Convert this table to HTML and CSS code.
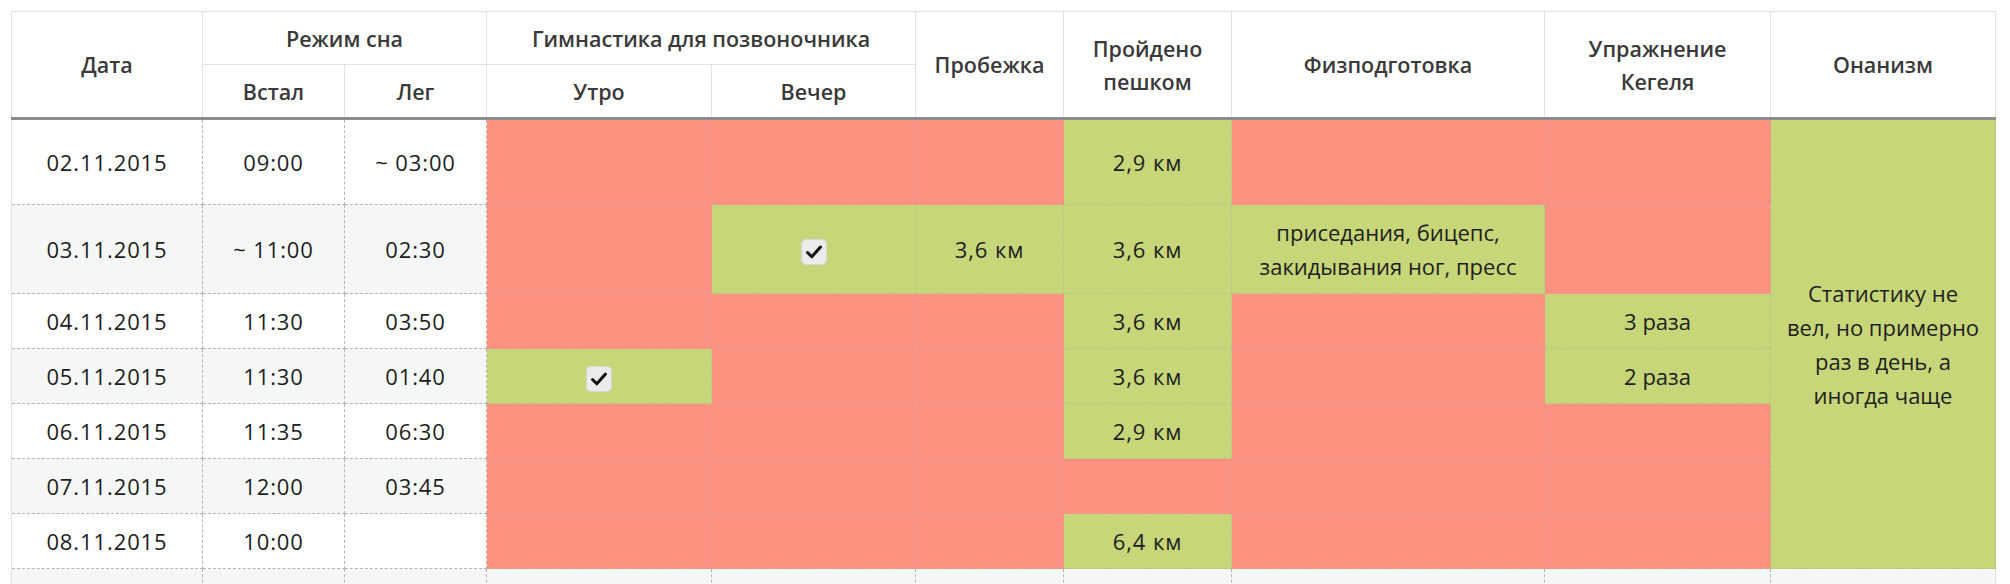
FILE: index.html
```html
<!DOCTYPE html>
<html lang="ru">
<head>
<meta charset="utf-8">
<title>Статистика</title>
<link rel="stylesheet" href="styles.css">
</head>
<body>
<div class="wrap">
<table class="stats">
  <colgroup>
    <col class="c-date"><col class="c-up"><col class="c-down"><col class="c-morning"><col class="c-evening">
    <col class="c-run"><col class="c-walk"><col class="c-fit"><col class="c-kegel"><col class="c-last">
  </colgroup>
  <thead>
    <tr class="h1">
      <th rowspan="2">Дата</th>
      <th colspan="2">Режим сна</th>
      <th colspan="2">Гимнастика для позвоночника</th>
      <th rowspan="2">Пробежка</th>
      <th rowspan="2">Пройдено<br>пешком</th>
      <th rowspan="2">Физподготовка</th>
      <th rowspan="2">Упражнение<br>Кегеля</th>
      <th rowspan="2">Онанизм</th>
    </tr>
    <tr class="h2">
      <th>Встал</th><th>Лег</th><th>Утро</th><th>Вечер</th>
    </tr>
  </thead>
  <tbody>
    <tr class="r-tall1">
      <td class="num">02.11.2015</td><td class="num">09:00</td><td class="num">~ 03:00</td>
      <td class="no"></td><td class="no"></td><td class="no"></td>
      <td class="yes num">2,9 км</td><td class="no"></td><td class="no"></td>
      <td class="yes last" rowspan="7">Статистику не<br>вел, но примерно<br>раз в день, а<br>иногда чаще</td>
    </tr>
    <tr class="odd r-tall2">
      <td class="num">03.11.2015</td><td class="num">~ 11:00</td><td class="num">02:30</td>
      <td class="no"></td>
      <td class="yes"><span class="check"><svg viewBox="0 0 26 26" width="26" height="26"><rect x="0.5" y="0.5" width="25" height="25" rx="4.5" fill="#ebebeb" stroke="#d6d6d6"/><path d="M6.5 13.5 L10.8 17.8 L19.5 8" fill="none" stroke="#111" stroke-width="3" stroke-linecap="round" stroke-linejoin="round"/></svg></span></td>
      <td class="yes num">3,6 км</td><td class="yes num">3,6 км</td>
      <td class="yes">приседания, бицепс,<br>закидывания ног, пресс</td>
      <td class="no"></td>
    </tr>
    <tr>
      <td class="num">04.11.2015</td><td class="num">11:30</td><td class="num">03:50</td>
      <td class="no"></td><td class="no"></td><td class="no"></td>
      <td class="yes num">3,6 км</td><td class="no"></td><td class="yes">3 раза</td>
    </tr>
    <tr class="odd">
      <td class="num">05.11.2015</td><td class="num">11:30</td><td class="num">01:40</td>
      <td class="yes"><span class="check"><svg viewBox="0 0 26 26" width="26" height="26"><rect x="0.5" y="0.5" width="25" height="25" rx="4.5" fill="#ebebeb" stroke="#d6d6d6"/><path d="M6.5 13.5 L10.8 17.8 L19.5 8" fill="none" stroke="#111" stroke-width="3" stroke-linecap="round" stroke-linejoin="round"/></svg></span></td>
      <td class="no"></td><td class="no"></td>
      <td class="yes num">3,6 км</td><td class="no"></td><td class="yes">2 раза</td>
    </tr>
    <tr>
      <td class="num">06.11.2015</td><td class="num">11:35</td><td class="num">06:30</td>
      <td class="no"></td><td class="no"></td><td class="no"></td>
      <td class="yes num">2,9 км</td><td class="no"></td><td class="no"></td>
    </tr>
    <tr class="odd">
      <td class="num">07.11.2015</td><td class="num">12:00</td><td class="num">03:45</td>
      <td class="no"></td><td class="no"></td><td class="no"></td>
      <td class="no"></td><td class="no"></td><td class="no"></td>
    </tr>
    <tr>
      <td class="num">08.11.2015</td><td class="num">10:00</td><td></td>
      <td class="no"></td><td class="no"></td><td class="no"></td>
      <td class="yes num">6,4 км</td><td class="no"></td><td class="no"></td>
    </tr>
    <tr class="odd">
      <td></td><td></td><td></td><td></td><td></td><td></td><td></td><td></td><td></td><td class="last"></td>
    </tr>
  </tbody>
</table>
</div>
</body>
</html>
```
FILE: styles.css
```css
html { overflow: hidden; }
body {
  margin: 0;
  background: #fff;
  font-family: "Open Sans", "Noto Sans", sans-serif;
  color: #222;
}
.wrap {
  padding: 11px 0 0 11px;
}
.stats {
  width: 1985px;
  table-layout: fixed;
  border-collapse: collapse;
}
.c-date { width: 191px; }
.c-up { width: 142px; }
.c-down { width: 142px; }
.c-morning { width: 225px; }
.c-evening { width: 204px; }
.c-run { width: 148px; }
.c-walk { width: 168px; }
.c-fit { width: 313px; }
.c-kegel { width: 226px; }
.c-last { width: 225px; }

.stats th {
  font-weight: 600;
  font-size: 21.5px;
  line-height: 33px;
  color: #3a3a3a;
  border: 1px solid #e2e2e2;
  padding: 0 6px;
  text-align: center;
  vertical-align: middle;
}
.stats tr.h1 th, .stats tr.h2 th { height: 52px; }
.stats thead tr.h2 th { border-bottom: 3px solid #8c8c8c; }
.stats thead tr.h1 th[rowspan] { border-bottom: 3px solid #8c8c8c; }

.stats td {
  font-size: 22px;
  line-height: 34px;
  font-weight: 400;
  color: #1e1e1e;
  text-align: center;
  vertical-align: middle;
  padding: 10px 8px;
  height: 34px;
  border: 1px dashed #b4b4b4;
}
.stats td.num { letter-spacing: 0.9px; }
.stats td:first-child { border-left: 1px solid #e2e2e2; }
.stats td.last { border-right: 1px solid #e2e2e2; }
.stats tr.r-tall1 td { height: 64px; }
.stats tr.r-tall2 td { height: 67px; }
.stats tr.odd td { background: #f4f7f6; }
.stats td.no, .stats tr.odd td.no {
  background: #fe9281;
  border-color: #e79a8c;
}
.stats td.yes, .stats tr.odd td.yes {
  background: #c6d679;
  border-color: #b8c48a;
}
.check {
  display: inline-block;
  width: 26px;
  height: 26px;
  vertical-align: middle;
}
.check svg { display: block; }
```
